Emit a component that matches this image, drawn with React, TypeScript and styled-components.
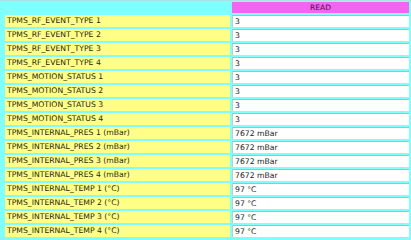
import styled, { createGlobalStyle } from 'styled-components';

const GlobalStyle = createGlobalStyle`
  html, body {
    margin: 0;
    padding: 0;
    background: #80ffff;
  }
  body {
    font-family: 'DejaVu Sans', Verdana, sans-serif;
  }
`;

const Page = styled.div`
  width: 411px;
  height: 240px;
  box-sizing: border-box;
  border-top: 1px solid #a8e4e4;
  background: #80ffff;
  overflow: hidden;
`;

const Table = styled.table`
  margin: -1px 0 0 3px;
  border-spacing: 2px;
  border-collapse: separate;
  table-layout: fixed;
  width: 408px;
`;

const Col = styled.col<{ $width: number }>`
  width: ${(p) => p.$width}px;
`;

const HeadCell = styled.th<{ $filled?: boolean }>`
  height: 11px;
  padding: 0;
  font-size: 7.5px;
  font-weight: normal;
  line-height: 11px;
  text-align: center;
  color: #4a104a;
  background: ${(p) => (p.$filled ? '#f264f2' : 'transparent')};
`;

const Label = styled.td`
  height: 12px;
  padding: 0 0 0 2px;
  font-size: 7.7px;
  line-height: 12px;
  color: #26260c;
  background: #ffff88;
  white-space: nowrap;
  overflow: hidden;
`;

const Value = styled.td`
  height: 12px;
  padding: 0 0 0 2px;
  box-sizing: border-box;
  font-size: 7.7px;
  line-height: 11px;
  color: #222222;
  background: #ffffff;
  border-top: 1px solid #b8b8b8;
  border-left: 1px solid #c8c8c8;
  white-space: nowrap;
  overflow: hidden;
`;

const rows: [string, string][] = [
  ['TPMS_RF_EVENT_TYPE 1', '3'],
  ['TPMS_RF_EVENT_TYPE 2', '3'],
  ['TPMS_RF_EVENT_TYPE 3', '3'],
  ['TPMS_RF_EVENT_TYPE 4', '3'],
  ['TPMS_MOTION_STATUS 1', '3'],
  ['TPMS_MOTION_STATUS 2', '3'],
  ['TPMS_MOTION_STATUS 3', '3'],
  ['TPMS_MOTION_STATUS 4', '3'],
  ['TPMS_INTERNAL_PRES 1 (mBar)', '7672 mBar'],
  ['TPMS_INTERNAL_PRES 2 (mBar)', '7672 mBar'],
  ['TPMS_INTERNAL_PRES 3 (mBar)', '7672 mBar'],
  ['TPMS_INTERNAL_PRES 4 (mBar)', '7672 mBar'],
  ['TPMS_INTERNAL_TEMP 1 (°C)', '97 °C'],
  ['TPMS_INTERNAL_TEMP 2 (°C)', '97 °C'],
  ['TPMS_INTERNAL_TEMP 3 (°C)', '97 °C'],
  ['TPMS_INTERNAL_TEMP 4 (°C)', '97 °C'],
];

export default function App() {
  return (
    <Page>
      <GlobalStyle />
      <Table>
        <colgroup>
          <Col $width={225} />
          <Col $width={177} />
        </colgroup>
        <thead>
          <tr>
            <HeadCell />
            <HeadCell $filled>READ</HeadCell>
          </tr>
        </thead>
        <tbody>
          {rows.map(([name, value]) => (
            <tr key={name}>
              <Label>{name}</Label>
              <Value>{value}</Value>
            </tr>
          ))}
        </tbody>
      </Table>
    </Page>
  );
}
